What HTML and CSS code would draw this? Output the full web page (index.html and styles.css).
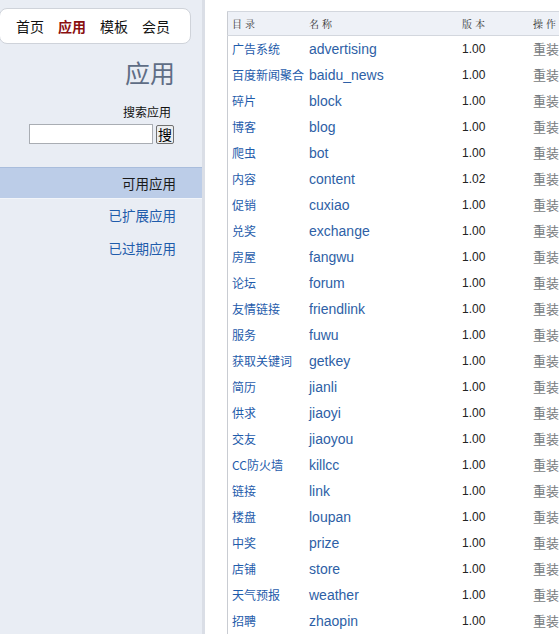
FILE: index.html
```html
<!DOCTYPE html>
<html>
<head>
<meta charset="utf-8">
<link rel="stylesheet" href="styles.css">
</head>
<body>
<div class="page">
  <aside class="side">
    <nav class="topnav">
      <a class="nav-item">首页</a>
      <a class="nav-item active">应用</a>
      <a class="nav-item">模板</a>
      <a class="nav-item">会员</a>
    </nav>
    <h1 class="title">应用</h1>
    <div class="search">
      <div class="search-label">搜索应用</div>
      <div class="search-row">
        <input class="search-input" type="text">
        <button class="search-btn">搜</button>
      </div>
    </div>
    <ul class="menu">
      <li class="menu-item current">可用应用</li>
      <li class="menu-item">已扩展应用</li>
      <li class="menu-item">已过期应用</li>
    </ul>
  </aside>
  <div class="divider"></div>
  <main class="main">
    <table class="apps">
      <thead>
        <tr><th class="c1">目录</th><th class="c2">名称</th><th class="c3">版本</th><th class="c4">操作</th></tr>
      </thead>
      <tbody>
        <tr><td class="dir">广告系统</td><td class="name">advertising</td><td class="ver">1.00</td><td class="op">重装</td></tr>
        <tr><td class="dir">百度新闻聚合</td><td class="name">baidu_news</td><td class="ver">1.00</td><td class="op">重装</td></tr>
        <tr><td class="dir">碎片</td><td class="name">block</td><td class="ver">1.00</td><td class="op">重装</td></tr>
        <tr><td class="dir">博客</td><td class="name">blog</td><td class="ver">1.00</td><td class="op">重装</td></tr>
        <tr><td class="dir">爬虫</td><td class="name">bot</td><td class="ver">1.00</td><td class="op">重装</td></tr>
        <tr><td class="dir">内容</td><td class="name">content</td><td class="ver">1.02</td><td class="op">重装</td></tr>
        <tr><td class="dir">促销</td><td class="name">cuxiao</td><td class="ver">1.00</td><td class="op">重装</td></tr>
        <tr><td class="dir">兑奖</td><td class="name">exchange</td><td class="ver">1.00</td><td class="op">重装</td></tr>
        <tr><td class="dir">房屋</td><td class="name">fangwu</td><td class="ver">1.00</td><td class="op">重装</td></tr>
        <tr><td class="dir">论坛</td><td class="name">forum</td><td class="ver">1.00</td><td class="op">重装</td></tr>
        <tr><td class="dir">友情链接</td><td class="name">friendlink</td><td class="ver">1.00</td><td class="op">重装</td></tr>
        <tr><td class="dir">服务</td><td class="name">fuwu</td><td class="ver">1.00</td><td class="op">重装</td></tr>
        <tr><td class="dir">获取关键词</td><td class="name">getkey</td><td class="ver">1.00</td><td class="op">重装</td></tr>
        <tr><td class="dir">简历</td><td class="name">jianli</td><td class="ver">1.00</td><td class="op">重装</td></tr>
        <tr><td class="dir">供求</td><td class="name">jiaoyi</td><td class="ver">1.00</td><td class="op">重装</td></tr>
        <tr><td class="dir">交友</td><td class="name">jiaoyou</td><td class="ver">1.00</td><td class="op">重装</td></tr>
        <tr><td class="dir">CC防火墙</td><td class="name">killcc</td><td class="ver">1.00</td><td class="op">重装</td></tr>
        <tr><td class="dir">链接</td><td class="name">link</td><td class="ver">1.00</td><td class="op">重装</td></tr>
        <tr><td class="dir">楼盘</td><td class="name">loupan</td><td class="ver">1.00</td><td class="op">重装</td></tr>
        <tr><td class="dir">中奖</td><td class="name">prize</td><td class="ver">1.00</td><td class="op">重装</td></tr>
        <tr><td class="dir">店铺</td><td class="name">store</td><td class="ver">1.00</td><td class="op">重装</td></tr>
        <tr><td class="dir">天气预报</td><td class="name">weather</td><td class="ver">1.00</td><td class="op">重装</td></tr>
        <tr><td class="dir">招聘</td><td class="name">zhaopin</td><td class="ver">1.00</td><td class="op">重装</td></tr>
      </tbody>
    </table>
  </main>
</div>
</body>
</html>
```

FILE: styles.css
```css
html, body {
  margin: 0;
  padding: 0;
  height: 100%;
  overflow: hidden;
  background: #ffffff;
  font-family: "Liberation Sans", "Noto Sans CJK SC", sans-serif;
}
.page {
  display: flex;
  height: 634px;
  width: 100%;
  overflow: hidden;
}
.side {
  width: 202px;
  flex: 0 0 202px;
  background: #e9edf4;
  display: flex;
  flex-direction: column;
}
.divider {
  width: 3px;
  flex: 0 0 3px;
  background: #dadee6;
}
.topnav {
  margin: 8px 0 0 -1px;
  width: 192px;
  height: 36px;
  box-sizing: border-box;
  background: #fff;
  border: 1px solid #cfd3da;
  border-radius: 8px;
  display: flex;
  align-items: center;
  gap: 12px;
  padding-left: 16px;
}
.nav-item {
  font-family: "Noto Sans CJK SC", sans-serif;
  font-size: 14px;
  line-height: 16px;
  color: #111;
  width: 30px;
}
.nav-item.active {
  color: #8a0f0f;
  font-weight: bold;
}
.title {
  margin: 13px 27px 0 0;
  text-align: right;
  font-family: "Noto Sans CJK SC", sans-serif;
  font-weight: normal;
  font-size: 25px;
  line-height: 30px;
  color: #5f6d85;
}
.search {
  margin: 17px 28px 0 0;
  display: flex;
  flex-direction: column;
  align-items: flex-end;
}
.search-label {
  font-family: "Noto Sans CJK SC", sans-serif;
  font-size: 12px;
  line-height: 16px;
  color: #111;
  margin-right: 3px;
}
.search-row {
  display: flex;
  align-items: center;
  gap: 3px;
  margin-top: 4px;
}
.search-input {
  width: 124px;
  height: 20px;
  box-sizing: border-box;
  border: 1px solid #a9adb3;
  background: #fff;
  margin: 0;
  padding: 0;
}
.search-btn {
  width: 18px;
  height: 19px;
  box-sizing: border-box;
  padding: 0;
  margin: 0;
  border: 1px solid #707070;
  border-radius: 2px;
  background: #eceef0;
  font-family: "Noto Sans CJK SC", sans-serif;
  font-size: 14px;
  line-height: 16px;
  color: #000;
}
.menu {
  list-style: none;
  margin: 23px 0 0 0;
  padding: 0;
}
.menu-item {
  height: 33px;
  line-height: 31px;
  text-align: right;
  padding-right: 26px;
  font-family: "Noto Sans CJK SC", sans-serif;
  font-size: 13.5px;
  color: #1f5cab;
  box-sizing: border-box;
}
.menu-item.current {
  height: 32px;
  background: #bccde8;
  color: #1a1a1a;
  border-top: 1px solid #a9bddc;
  border-bottom: 1px solid #f2f5fa;
  line-height: 30px;
  margin-bottom: 1px;
}
.main {
  flex: 1;
  min-width: 0;
  overflow: hidden;
  padding: 11px 0 0 22px;
}
.apps {
  border-collapse: collapse;
  width: 420px;
  border-left: 1px solid #c9ccd2;
}
.apps th {
  height: 23px;
  background: #eef1f7;
  border-top: 1px solid #d3d7de;
  border-bottom: 1px solid #d3d7de;
  text-align: left;
  font-family: "Noto Serif CJK SC", "Noto Sans CJK SC", serif;
  font-weight: normal;
  font-size: 10px;
  letter-spacing: 3px;
  color: #333;
  padding: 0 0 0 4px;
}
.apps td {
  height: 26px;
  padding: 0 0 0 4px;
  line-height: 16px;
  white-space: nowrap;
}
.c1 { width: 73px; }
.c2 { width: 149px; }
.c3 { width: 67px; }
.dir {
  font-family: "Noto Sans CJK SC", sans-serif;
  font-size: 12px;
  color: #1f5cab;
}
.name {
  font-family: "Liberation Sans", sans-serif;
  font-size: 14px;
  color: #2e5fa6;
}
.ver {
  font-family: "Liberation Sans", sans-serif;
  font-size: 12px;
  color: #222;
}
.op {
  font-family: "Noto Sans CJK SC", sans-serif;
  font-size: 13px;
  color: #777b80;
}
```
